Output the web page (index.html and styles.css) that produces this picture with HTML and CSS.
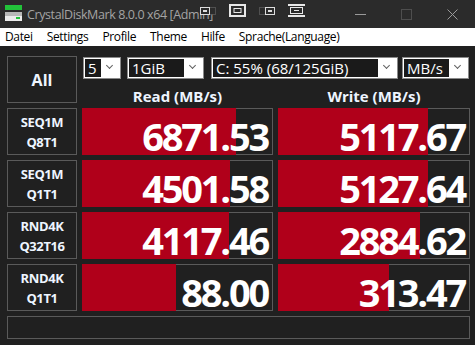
FILE: index.html
```html
<!DOCTYPE html>
<html>
<head>
    <title>CrystalDiskMark 8.0.0 x64 [Admin]</title>
    <link rel="stylesheet" href="styles.css">
</head>
<body>
    <div class="titlebar">
        <svg class="app-icon" width="18" height="18" viewBox="0 0 18 18">
            <rect x="0" y="0" width="17" height="5" fill="#22c33a"/>
            <rect x="0" y="7" width="17" height="4" fill="#b8b8b8"/>
            <rect x="0" y="11" width="17" height="5" fill="#ececec"/>
            <rect x="11" y="12" width="4" height="2" fill="#22c33a"/>
        </svg>
        <span class="title">CrystalDiskMark 8.0.0 x64 [Admin]</span>
        <div class="tools">
            <svg width="16" height="8" viewBox="0 0 16 8">
                <rect x="8.5" y="0.5" width="7" height="7" fill="#2b2b2b" stroke="#777" stroke-dasharray="1 1"/>
                <rect x="0.5" y="0.5" width="9" height="7" fill="#2b2b2b" stroke="#ddd"/>
                <rect x="3" y="3" width="4" height="2" fill="#ddd"/>
            </svg>
            <svg width="17" height="13" viewBox="0 0 17 13">
                <rect x="1" y="1" width="15" height="11" fill="none" stroke="#e8e8e8" stroke-width="2"/>
                <rect x="5" y="4.5" width="7" height="4" fill="none" stroke="#e8e8e8"/>
            </svg>
            <svg width="16" height="8" viewBox="0 0 16 8">
                <rect x="0.5" y="0.5" width="7" height="7" fill="none" stroke="#777" stroke-dasharray="1 1"/>
                <rect x="6.5" y="0.5" width="9" height="7" fill="#2b2b2b" stroke="#ddd"/>
                <rect x="9" y="3" width="4" height="2" fill="#ddd"/>
            </svg>
            <svg width="17" height="13" viewBox="0 0 17 13">
                <rect x="0" y="0" width="17" height="2" fill="#e8e8e8"/>
                <rect x="0" y="11" width="17" height="2" fill="#e8e8e8"/>
                <rect x="2.5" y="3.5" width="12" height="6" fill="none" stroke="#e8e8e8"/>
                <rect x="6" y="6" width="5" height="1" fill="#e8e8e8"/>
            </svg>
        </div>
        <div class="winbtns">
            <div class="winbtn">
                <svg width="11" height="1" viewBox="0 0 11 1"><rect width="11" height="1" fill="#9a9a9a"/></svg>
            </div>
            <div class="winbtn">
                <svg width="11" height="11" viewBox="0 0 11 11"><rect x="0.5" y="0.5" width="10" height="10" fill="none" stroke="#4e4e4e"/></svg>
            </div>
            <div class="winbtn">
                <svg width="11" height="11" viewBox="0 0 11 11"><path d="M0.5 0.5 L10.5 10.5 M10.5 0.5 L0.5 10.5" stroke="#9a9a9a" fill="none"/></svg>
            </div>
        </div>
    </div>

    <div class="menubar">
        <span>Datei</span>
        <span>Settings</span>
        <span>Profile</span>
        <span>Theme</span>
        <span>Hilfe</span>
        <span>Sprache(Language)</span>
    </div>

    <div class="main">
        <div class="box all">All</div>
        <div class="top">
            <div class="combos">
                <div class="combo c-count"><span class="sel">5</span><span class="arrow"></span></div>
                <div class="combo c-size"><span class="sel">1GiB</span><span class="arrow"></span></div>
                <div class="combo c-drive"><span class="sel">C: 55% (68/125GiB)</span><span class="arrow"></span></div>
                <div class="combo c-unit"><span class="sel">MB/s</span><span class="arrow"></span></div>
            </div>
            <div class="heads">
                <div>Read (MB/s)</div>
                <div>Write (MB/s)</div>
            </div>
        </div>

        <div class="box label">SEQ1M<br>Q8T1</div>
        <div class="box val"><div class="bar" style="width:154px"></div><span class="num">6871.53</span></div>
        <div class="box val"><div class="bar" style="width:150px"></div><span class="num">5117.67</span></div>

        <div class="box label">SEQ1M<br>Q1T1</div>
        <div class="box val"><div class="bar" style="width:148px"></div><span class="num">4501.58</span></div>
        <div class="box val"><div class="bar" style="width:150px"></div><span class="num">5127.64</span></div>

        <div class="box label">RND4K<br>Q32T16</div>
        <div class="box val"><div class="bar" style="width:147px"></div><span class="num">4117.46</span></div>
        <div class="box val"><div class="bar" style="width:142px"></div><span class="num">2884.62</span></div>

        <div class="box label">RND4K<br>Q1T1</div>
        <div class="box val"><div class="bar" style="width:94px"></div><span class="num">88.00</span></div>
        <div class="box val"><div class="bar" style="width:111px"></div><span class="num">313.47</span></div>

        <div class="box status"></div>
    </div>
</body>
</html>
```

FILE: styles.css
```css
body {
    margin: 0;
    width: 475px;
    height: 345px;
    overflow: hidden;
    background: #202020;
    font-family: "Open Sans", "Noto Sans", sans-serif;
}

.titlebar {
    position: relative;
    height: 28px;
    display: flex;
    align-items: center;
    background: #2b2b2b;
}
.app-icon { margin: 0 4px 0 5px; flex: none; }
.title {
    color: #a4a4a4;
    font-size: 12.5px;
    white-space: nowrap;
    letter-spacing: -0.4px;
}
.tools {
    position: absolute;
    left: 200px;
    top: 4px;
    height: 13px;
    display: flex;
    align-items: center;
    gap: 13px;
}
.winbtns {
    margin-left: auto;
    display: flex;
    height: 28px;
}
.winbtn {
    width: 46px;
    display: flex;
    align-items: center;
    justify-content: center;
}

.menubar {
    height: 18px;
    background: #fff;
    display: flex;
    gap: 14px;
    padding-left: 5px;
    font-size: 12px;
    line-height: 18px;
    letter-spacing: -0.35px;
    color: #000;
}

.main {
    display: grid;
    grid-template-columns: 70px 191px 192px;
    grid-template-rows: 47px 47px 47px 47px 47px 23px;
    gap: 5px;
    padding: 10px 0 0 7px;
}

.box {
    box-sizing: border-box;
    border: 1px solid #5a5a5a;
    background: #202020;
    color: #eef5ff;
    font-weight: bold;
}
.all {
    display: flex;
    align-items: center;
    justify-content: center;
    font-size: 16px;
}
.label {
    display: flex;
    align-items: center;
    justify-content: center;
    text-align: center;
    font-size: 13px;
    line-height: 20px;
    letter-spacing: -0.4px;
}
.val {
    position: relative;
    text-align: right;
    padding: 8px 4px 0 0;
}
.bar {
    position: absolute;
    left: -1px;
    top: -1px;
    bottom: -1px;
    background: #b0001a;
}
.num {
    position: relative;
    color: #fff;
    font-size: 38px;
    line-height: 38px;
    letter-spacing: -2.2px;
}
.status { grid-column: 1 / 4; }

.top {
    grid-column: 2 / 4;
}
.combos {
    display: flex;
    margin: 1px 0 0 1px;
}
.combo {
    box-sizing: border-box;
    height: 22px;
    display: flex;
    background: #fff;
    border: 1px solid #8a8a8a;
    padding: 1px;
}
.sel {
    flex: 1;
    background: #1a1a1a;
    color: #fff;
    font-size: 15px;
    line-height: 18px;
    padding-left: 3px;
    white-space: nowrap;
    overflow: hidden;
}
.arrow {
    width: 18px;
    position: relative;
}
.arrow::after {
    content: "";
    position: absolute;
    left: 6px;
    top: 4px;
    width: 4px;
    height: 4px;
    border-right: 1px solid #606060;
    border-bottom: 1px solid #606060;
    transform: rotate(45deg);
}
.c-count { width: 38px; margin-right: 6px; }
.c-size { width: 77px; margin-right: 7px; }
.c-drive { width: 187px; margin-right: 4px; }
.c-unit { width: 67px; }

.heads {
    display: grid;
    grid-template-columns: 191px 192px;
    gap: 5px;
    margin-top: 7px;
    color: #eef5ff;
    font-weight: bold;
    font-size: 15px;
    line-height: 20px;
    text-align: center;
}
```
